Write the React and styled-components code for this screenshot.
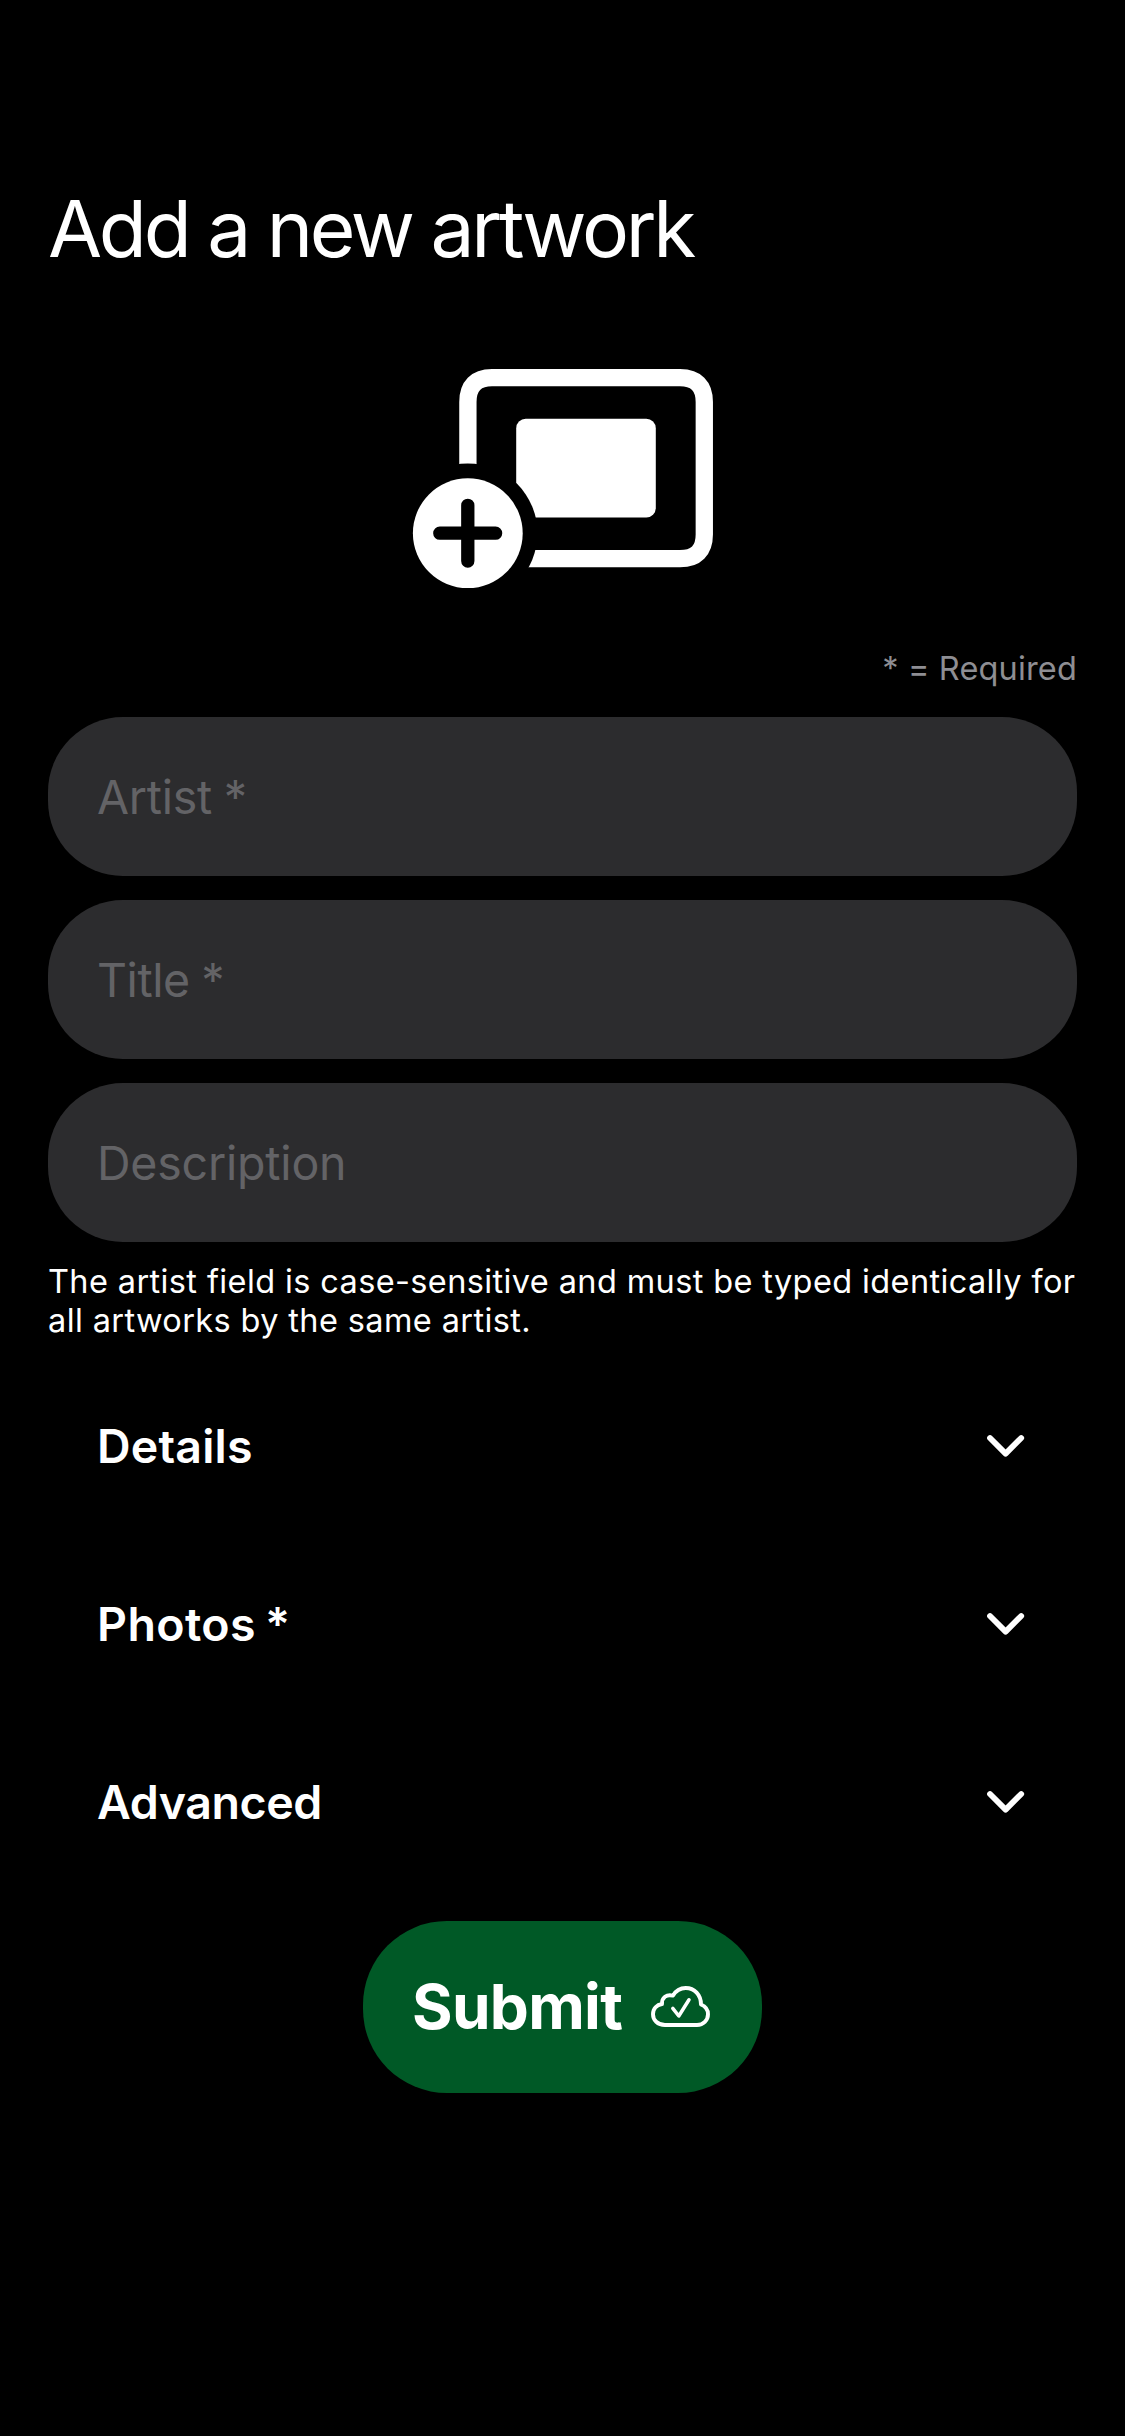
import React from "react";
import styled, { createGlobalStyle } from "styled-components";

const GlobalStyle = createGlobalStyle`
  *, *::before, *::after { box-sizing: border-box; }
  body { margin: 0; background: #000; }
`;

const Screen = styled.main`
  display: flex;
  flex-direction: column;
  align-items: stretch;
  min-height: 2436px;
  padding: 181px 48px 0;
  background: #000;
  color: #fff;
  font-family: Inter, "Liberation Sans", sans-serif;
`;

const Title = styled.h1`
  margin: 0;
  font-size: 78.5px;
  line-height: 96px;
  font-weight: 400;
  letter-spacing: -3.3px;
  white-space: nowrap;
`;

const Artwork = styled.svg`
  display: block;
  align-self: center;
  width: 302px;
  height: 222px;
  margin-top: 91px;
`;

const Required = styled.p`
  margin: 59px 0 0;
  align-self: flex-end;
  color: #8e8e93;
  font-size: 32.5px;
  line-height: 40px;
  letter-spacing: 0.15px;
`;

const Fields = styled.div`
  display: flex;
  flex-direction: column;
  gap: 24px;
  margin-top: 28px;
`;

const Field = styled.div`
  display: flex;
  align-items: center;
  height: 159px;
  padding: 0 49px;
  border-radius: 75px;
  background: #2c2c2e;
  color: #636366;
  font-size: 46.5px;
  line-height: 58px;
  letter-spacing: ${(p) => p.$tracking || 0}px;
  word-spacing: -1px;
`;

const Note = styled.p`
  margin: 20px 0 0;
  font-size: 32.5px;
  line-height: 39px;
  letter-spacing: 0.38px;
  white-space: nowrap;
`;

const Sections = styled.div`
  display: flex;
  flex-direction: column;
  margin-top: 17px;
`;

const Section = styled.div`
  display: flex;
  align-items: center;
  justify-content: space-between;
  height: 178px;
  padding: 0 52px 0 49px;
  font-size: 46.5px;
  line-height: 58px;
  font-weight: 600;
  letter-spacing: ${(p) => p.$tracking || 0}px;
  word-spacing: -3px;
`;

const Chevron = styled.svg`
  display: block;
  width: 38px;
  height: 24px;
`;

const Submit = styled.button`
  display: flex;
  align-items: center;
  align-self: center;
  justify-content: space-between;
  width: 399px;
  height: 172px;
  margin-top: 30px;
  padding: 0 51px 0 49px;
  border: 0;
  border-radius: 84px;
  background: #005926;
  color: #fff;
  font-family: inherit;
  font-size: 62px;
  line-height: 76px;
  font-weight: 700;
  letter-spacing: -0.7px;
`;

const Cloud = styled.svg`
  display: block;
  width: 60px;
  height: 42px;
`;

function ArtworkIcon() {
  return (
    <Artwork viewBox="412 368 302 222" aria-hidden="true">
      <mask id="badge-gap">
        <rect x="412" y="368" width="302" height="222" fill="#fff" />
        <circle cx="467.7" cy="533.2" r="69.8" fill="#000" />
      </mask>
      <g mask="url(#badge-gap)">
        <path
          d="M492 377.7H680C696 377.7 704.3 386 704.3 402V534.5C704.3 550.5 696 558.7 680 558.7H492C476 558.7 467.9 550.5 467.9 534.5V402C467.9 386 476 377.7 492 377.7Z"
          fill="none"
          stroke="#fff"
          strokeWidth="17.3"
        />
        <rect x="516.2" y="418.8" width="139.6" height="98.8" rx="9.5" fill="#fff" />
      </g>
      <circle cx="467.8" cy="533.2" r="54.9" fill="#fff" />
      <path d="M439.8 533.2H495.6M467.8 505.3V561.1" stroke="#000" strokeWidth="13.3" strokeLinecap="round" />
    </Artwork>
  );
}

function ChevronIcon() {
  return (
    <Chevron viewBox="0 0 38 24" fill="none" stroke="#fff" strokeWidth="5.8" strokeLinecap="round" strokeLinejoin="round" aria-hidden="true">
      <path d="M3 4L18.6 19.6L34.2 4" />
    </Chevron>
  );
}

function CloudIcon() {
  return (
    <Cloud viewBox="651 1986 60 42" fill="none" stroke="#fff" strokeWidth="3.9" strokeLinecap="round" strokeLinejoin="round" aria-hidden="true">
      <path d="M665 2025C657.5 2025 653 2020 653 2014.2C653 2008.6 656.8 2004.8 662 2004C661.7 1997.5 666.5 1994 673 1995.6C675.8 1990.7 680.3 1988 685.7 1988C694.5 1988 701 1994.8 701 2004.5C705.5 2006.3 708 2010 708 2014.3C708 2020.3 703.3 2025 697 2025Z" />
      <path d="M672.8 2008.3L678.8 2016L689 1999.8" strokeWidth="3.5" />
    </Cloud>
  );
}

const fields = [
  { label: "Artist *", tracking: -0.25 },
  { label: "Title *", tracking: -0.45 },
  { label: "Description", tracking: -0.2 },
];

const sections = [
  { label: "Details", tracking: 0.2 },
  { label: "Photos *", tracking: 0.4 },
  { label: "Advanced", tracking: -0.4 },
];

export default function App() {
  return (
    <>
      <GlobalStyle />
      <Screen>
        <Title>Add a new artwork</Title>
        <ArtworkIcon />
        <Required>* = Required</Required>
        <Fields>
          {fields.map((f) => (
            <Field key={f.label} $tracking={f.tracking}>
              {f.label}
            </Field>
          ))}
        </Fields>
        <Note>
          The artist field is case-sensitive and must be typed identically for
          <br />
          all artworks by the same artist.
        </Note>
        <Sections>
          {sections.map((s) => (
            <Section key={s.label} $tracking={s.tracking}>
              {s.label}
              <ChevronIcon />
            </Section>
          ))}
        </Sections>
        <Submit type="button">
          Submit
          <CloudIcon />
        </Submit>
      </Screen>
    </>
  );
}
